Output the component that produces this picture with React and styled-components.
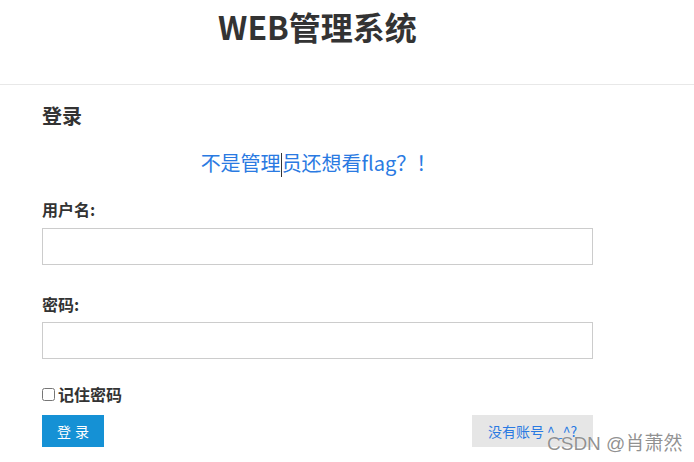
import React from "react";
import styled, { createGlobalStyle } from "styled-components";

const Global = createGlobalStyle`
  html, body { margin: 0; padding: 0; background: #fff; }
  body { font-family: "Noto Sans CJK SC", "Noto Sans", sans-serif; color: #333; }
  * { box-sizing: border-box; }
`;

const Page = styled.div`
  position: relative;
  width: 694px;
  height: 462px;
  overflow: hidden;
`;

const Header = styled.header`
  height: 85px;
  border-bottom: 1px solid #e8e8e8;
  padding-left: 42px;
`;

const Title = styled.h1`
  width: 551px;
  margin: 0;
  padding-top: 5px;
  text-align: center;
  font-size: 32px;
  line-height: 42px;
  font-weight: 700;
  color: #333;
`;

const Main = styled.main`
  width: 551px;
  margin-left: 42px;
  display: flex;
  flex-direction: column;
`;

const SectionTitle = styled.h2`
  margin: 16px 0 0;
  font-size: 20px;
  line-height: 30px;
  font-weight: 700;
  color: #333;
`;

const Message = styled.p`
  margin: 18px 0 0;
  text-align: center;
  font-size: 20px;
  line-height: 28px;
  color: #2a7ae2;
  padding-left: 2px;
`;

const Caret = styled.span`
  display: inline-block;
  width: 1px;
  height: 24px;
  background: #333;
  vertical-align: -6px;
`;

const Label = styled.label`
  display: block;
  margin-top: ${(p) => p.$mt}px;
  font-size: 16px;
  line-height: 22px;
  font-weight: 700;
  color: #333;
`;

const Input = styled.input`
  display: block;
  width: 551px;
  height: 37px;
  margin-top: ${(p) => p.$mt}px;
  border: 1px solid #ccc;
  background: #fff;
  outline: none;
`;

const Remember = styled.label`
  display: flex;
  align-items: center;
  gap: 3px;
  margin-top: 24px;
  font-size: 16px;
  line-height: 22px;
  font-weight: 700;
  color: #333;
`;

const Check = styled.input`
  margin: 1px 0 0;
  width: 13px;
  height: 13px;
`;

const Actions = styled.div`
  display: flex;
  justify-content: space-between;
  margin-top: 10px;
`;

const PrimaryButton = styled.button`
  width: 62px;
  height: 32px;
  border: none;
  background: #1591d5;
  color: #fff;
  font-family: inherit;
  font-size: 14px;
  letter-spacing: 4px;
  padding: 0 0 0 4px;
`;

const GhostButton = styled.button`
  width: 121px;
  height: 32px;
  border: none;
  background: #e6e6e6;
  color: #2a7ae2;
  font-family: inherit;
  font-size: 14px;
  padding: 0;
`;

const Watermark = styled.div`
  position: absolute;
  left: 547px;
  top: 431px;
  font-family: "Liberation Sans Narrow", "Liberation Sans", "Noto Sans CJK SC", sans-serif;
  font-size: 19px;
  line-height: 26px;
  color: rgba(125, 125, 125, 0.85);
  text-shadow: 0 0 1px #fff;
  white-space: nowrap;
`;

export default function App() {
  return (
    <Page>
      <Global />
      <Header>
        <Title>WEB管理系统</Title>
      </Header>
      <Main>
        <SectionTitle>登录</SectionTitle>
        <Message>
          不是管理<Caret />员还想看flag？！
        </Message>
        <Label $mt={21}>用户名:</Label>
        <Input $mt={8} type="text" />
        <Label $mt={28}>密码:</Label>
        <Input $mt={7} type="password" />
        <Remember>
          <Check type="checkbox" />
          记住密码
        </Remember>
        <Actions>
          <PrimaryButton>登录</PrimaryButton>
          <GhostButton>没有账号 ^_^?</GhostButton>
        </Actions>
      </Main>
      <Watermark>CSDN @肖萧然</Watermark>
    </Page>
  );
}
